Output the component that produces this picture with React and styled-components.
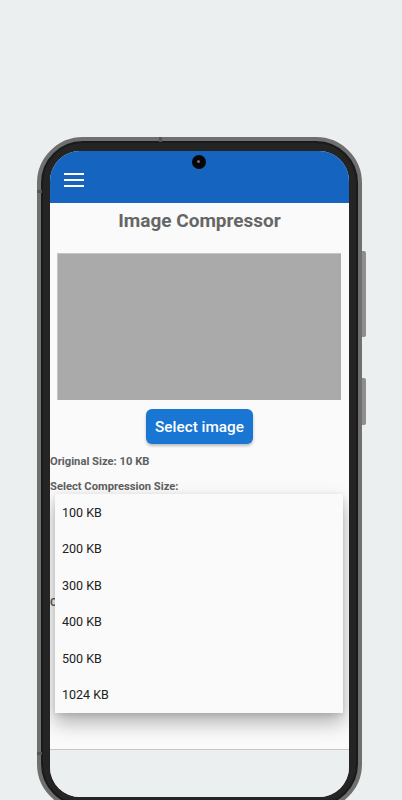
import React from 'react';
import styled, { createGlobalStyle } from 'styled-components';

const GlobalStyle = createGlobalStyle`
  html, body {
    margin: 0;
    height: 800px;
    overflow: hidden;
    background: #eceff0;
    font-family: Roboto, "Liberation Sans", sans-serif;
  }
`;

const Stage = styled.div`
  padding: 137px 0 0 37px;
`;

const Phone = styled.div`
  position: relative;
  box-sizing: border-box;
  width: 325px;
  height: 673px;
  padding: 10px 9px 9px;
  border: 4px solid #6f6f6f;
  border-radius: 46px;
  background: #242424;
  box-shadow: inset 0 0 0 2px #1a1a1a;
`;

const SideKey = styled.span`
  position: absolute;
  right: -8px;
  top: ${p => p.$top}px;
  width: 4px;
  height: ${p => p.$h}px;
  background: #8e8e8e;
  border-radius: 0 2px 2px 0;
`;

const Notch = styled.span`
  position: absolute;
  background: #555;
  ${p => p.$side === 'top'
    ? `top: -4px; left: ${p.$at}px; width: 3px; height: 5px;`
    : `left: -4px; top: ${p.$at}px; width: 5px; height: 3px;`}
`;

const Screen = styled.div`
  display: flex;
  flex-direction: column;
  height: 100%;
  border-radius: 30px;
  overflow: hidden;
  background: #eceff0;
`;

const AppBar = styled.header`
  position: relative;
  flex: 0 0 52px;
  box-sizing: border-box;
  padding: 22px 0 0 14px;
  background: #1565c0;
`;

const Camera = styled.span`
  position: absolute;
  top: 4px;
  left: 142px;
  width: 14px;
  height: 14px;
  border-radius: 50%;
  background: #050505;
  &::after {
    content: '';
    position: absolute;
    top: 5px;
    left: 5px;
    width: 3px;
    height: 3px;
    border-radius: 50%;
    background: #6a6a7a;
  }
`;

const Content = styled.main`
  position: relative;
  flex: 1;
  background: #fafafa;
`;

const BottomBar = styled.footer`
  flex: 0 0 47px;
  border-top: 1px solid #c7c7c7;
  background: #eceff0;
`;

const Title = styled.h1`
  margin: 0;
  padding-top: 6px;
  font-size: 19px;
  line-height: 24px;
  font-weight: 700;
  text-align: center;
  color: #666;
`;

const Preview = styled.div`
  height: 146px;
  margin: 20px 8px 0 7px;
  background: #aaaaaa;
  border-top: 1px solid #c4c4c4;
  border-left: 1px solid #c4c4c4;
`;

const ButtonRow = styled.div`
  display: flex;
  justify-content: center;
  margin-top: 9px;
`;

const Button = styled.button`
  height: 35px;
  padding: 0 9px;
  border: none;
  border-radius: 6px;
  background: #1976d2;
  color: #fff;
  font-family: inherit;
  font-size: 15.3px;
  font-weight: 500;
  box-shadow: 0 2px 3px rgba(0, 0, 0, 0.25);
`;

const Label = styled.p`
  margin: ${p => p.$gap}px 0 0;
  font-size: 11.2px;
  line-height: 16px;
  font-weight: 700;
  color: #5f5f5f;
`;

const PickerSlot = styled.div`
  height: 100px;
`;

const Menu = styled.ul`
  position: absolute;
  top: 291px;
  left: 5px;
  width: 288px;
  margin: 0;
  padding: 0;
  list-style: none;
  background: #fafafa;
  box-shadow: 0 10px 18px rgba(0, 0, 0, 0.28), 0 2px 6px rgba(0, 0, 0, 0.12);
`;

const MenuItem = styled.li`
  display: flex;
  align-items: center;
  height: 36.5px;
  padding-left: 7px;
  font-size: 12.5px;
  color: #212121;
`;

const MenuIcon = () => (
  <svg width="20" height="15" viewBox="0 0 20 15">
    <rect x="0" y="0" width="20" height="2" fill="#fff" />
    <rect x="0" y="6" width="20" height="2" fill="#fff" />
    <rect x="0" y="12" width="20" height="2" fill="#fff" />
  </svg>
);

const sizes = [100, 200, 300, 400, 500, 1024];

const App = () => (
  <>
    <GlobalStyle />
    <Stage>
      <Phone>
        <Notch $side="top" $at={118} />
        <Notch $side="left" $at={49} />
        <Notch $side="left" $at={611} />
        <SideKey $top={110} $h={86} />
        <SideKey $top={237} $h={47} />
        <Screen>
          <AppBar>
            <Camera />
            <MenuIcon />
          </AppBar>
          <Content>
            <Title>Image Compressor</Title>
            <Preview />
            <ButtonRow>
              <Button>Select image</Button>
            </ButtonRow>
            <Label $gap={10}>Original Size: 10 KB</Label>
            <Label $gap={9}>Select Compression Size:</Label>
            <PickerSlot />
            <Label $gap={0}>Compressed Size: 0 KB</Label>
            <Menu>
              {sizes.map(s => (
                <MenuItem key={s}>{s} KB</MenuItem>
              ))}
            </Menu>
          </Content>
          <BottomBar />
        </Screen>
      </Phone>
    </Stage>
  </>
);

export default App;
